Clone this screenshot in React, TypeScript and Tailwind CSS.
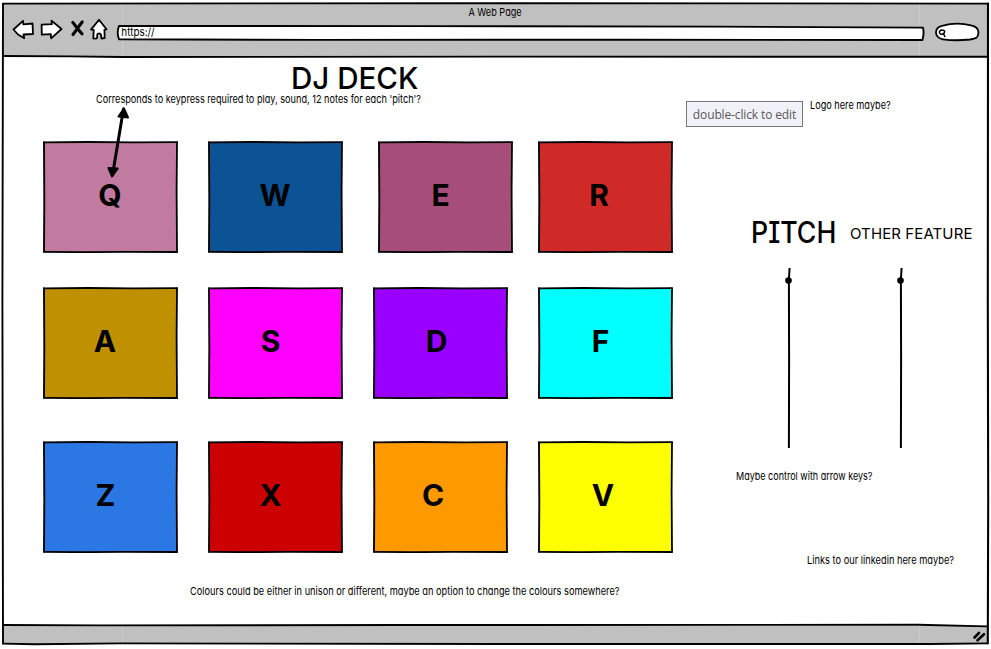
import type { ReactNode } from "react";

type Pad = { key: string; color: string; gap: string; nudge: string };

const rows: { place: string; nudgeY: string; pads: Pad[] }[] = [
  {
    place: "mt-[35px]",
    nudgeY: "pb-[4px]",
    pads: [
      { key: "Q", color: "bg-[#c27ba0]", gap: "ml-[43px]", nudge: "pr-[1px]" },
      { key: "W", color: "bg-[#0b5394]", gap: "ml-[30px]", nudge: "pr-[1px]" },
      { key: "E", color: "bg-[#a64d79]", gap: "ml-[35px]", nudge: "pr-[10px]" },
      { key: "R", color: "bg-[#cf2a27]", gap: "ml-[25px]", nudge: "pr-[13px]" },
    ],
  },
  {
    place: "mt-[34px]",
    nudgeY: "pb-[5px]",
    pads: [
      { key: "A", color: "bg-[#bf9000]", gap: "ml-[43px]", nudge: "pr-[11px]" },
      { key: "S", color: "bg-[#ff00ff]", gap: "ml-[30px]", nudge: "pr-[10px]" },
      { key: "D", color: "bg-[#9900ff]", gap: "ml-[30px]", nudge: "pr-[8px]" },
      { key: "F", color: "bg-[#00ffff]", gap: "ml-[30px]", nudge: "pr-[10px]" },
    ],
  },
  {
    place: "mt-[42px]",
    nudgeY: "pb-[5px]",
    pads: [
      { key: "Z", color: "bg-[#2b78e4]", gap: "ml-[43px]", nudge: "pr-[10px]" },
      { key: "X", color: "bg-[#cc0000]", gap: "ml-[30px]", nudge: "pr-[10px]" },
      { key: "C", color: "bg-[#ff9900]", gap: "ml-[30px]", nudge: "pr-[15px]" },
      { key: "V", color: "bg-[#ffff00]", gap: "ml-[30px]", nudge: "pr-[5px]" },
    ],
  },
];

function Note({
  children,
  scale = "scale-x-[0.832]",
  className = "",
}: {
  children: ReactNode;
  scale?: string;
  className?: string;
}) {
  return (
    <p className={`w-max origin-left whitespace-nowrap text-[11px] leading-[14px] ${scale} ${className}`}>{children}</p>
  );
}

function PadButton({ pad, nudgeY }: { pad: Pad; nudgeY: string }) {
  return (
    <div className={`relative h-[112px] w-[135px] shrink-0 p-px ${pad.gap}`}>
      <div
        className={`flex h-full w-full items-center justify-center text-[30px] leading-none font-bold ${pad.color} ${pad.nudge} ${nudgeY}`}
      >
        {pad.key}
      </div>
      <svg className="absolute inset-0" width="135" height="112" fill="none" stroke="#000" strokeLinecap="round">
        <path d="M1 1.3 L45 1 L90 1.4 L134 1.2" strokeWidth="1.8" />
        <path d="M134 1.2 L133.6 50 L134 111" strokeWidth="1.8" />
        <path d="M134 111 L80 110.8 L40 111.2 L1 110.8" strokeWidth="1.8" />
        <path d="M1 110.8 L1.3 60 L1 1.3" strokeWidth="1.9" />
      </svg>
    </div>
  );
}

function Slider() {
  return (
    <svg width="10" height="182" fill="none" stroke="#000" className="shrink-0">
      <path d="M5.6 1 L4.9 12 L5.1 90 L4.9 181" strokeWidth="2" />
      <circle cx="4.5" cy="13.5" r="3.3" fill="#000" stroke="none" />
    </svg>
  );
}

function Toolbar() {
  return (
    <header className="h-[54px] bg-[#c0c0c0]">
      <p className="flex h-[18px] items-center justify-center text-[11px] leading-[14px]">
        <span className="scale-x-[0.832]">A Web Page</span>
      </p>
      <div className="flex h-[18px] items-center">
        <svg className="ml-[9px] shrink-0" width="100" height="26" fill="#fff" stroke="#000" strokeWidth="1.8" strokeLinejoin="round">
          <path d="M1.5 12.5 L11 3.8 L11.3 7.4 L20.5 6.5 L21 17 L11.5 17.5 L12.3 21.2 L6 17.5 Z" />
          <path d="M49.5 12 L39.5 3.6 L39.8 7.2 L29.6 7.7 L29.8 17.7 L38.8 17.2 L39.2 21.4 Z" />
          <path d="M60.8 5.5 C63 8 66 12.5 70 16.8 M70.2 5 C67 9 64.5 13 61 17.5" strokeWidth="3.1" fill="none" strokeLinecap="round" />
          <path d="M87 2.8 L79 12.6 L81.7 12.8 L81.3 21.6 L85 21.3 L85.3 17.5 C86 16 88.2 16 88.9 17.5 L89.5 21.5 L92.7 21 L92.4 12.8 L94.5 12.3 Z" />
        </svg>
        <div className="relative mt-[6px] ml-[3px] h-[16px] w-[810px] shrink-0">
          <svg className="absolute inset-0" width="810" height="16" fill="#fff" stroke="#000" strokeWidth="1.9" strokeLinejoin="round">
            <path d="M4 1 L300 1.1 L600 1.6 L808 2.6 Q809.3 8 807.5 15 L500 14.7 L200 14.9 L4 14.2 Q1.4 8 4 1 Z" />
          </svg>
          <span className="relative block w-max origin-left scale-x-[0.9] pl-[7px] text-[11px] leading-[14px]">https://</span>
        </div>
        <svg className="mt-[4px] ml-[9px] shrink-0" width="48" height="20" fill="#fff" stroke="#000" strokeWidth="1.8">
          <path d="M8 3.8 C17 1.2 29 1.2 37 3.3 C43 4.5 44.8 7 44.4 11 C44.2 16 42 16.7 36 17.5 C26 18.6 16 18.3 9 17.3 C4 16.5 1.7 13 2 10 C2.2 7 4 4.8 8 3.8 Z" />
          <path d="M10.6 9.6 C10.6 7.6 5.2 7.2 5.4 10.3 C5.6 13.2 10.6 12.6 10.6 9.6 M9.5 11.5 L11 15" strokeWidth="1.5" fill="none" />
        </svg>
      </div>
    </header>
  );
}

export default function App() {
  return (
    <div
      className="relative h-[649px] w-[991px] overflow-hidden bg-white pt-[3px] pl-[3px] font-['Inter','Liberation_Sans',sans-serif] text-black [font-feature-settings:'cv08','cv11']"
    >
      <div className="flex h-[641px] w-[985px] flex-col">
        <Toolbar />
        <main className="flex min-h-0 flex-1">
          <section className="-ml-[3px] w-[683px] shrink-0">
            <h1 className="mt-[4px] ml-[291px] h-[31px] w-max origin-left scale-x-[0.985] text-[30px] leading-[35px] font-medium whitespace-nowrap">
              DJ DECK
            </h1>
            <Note className="ml-[96px]">
              Corresponds to keypress required to play, sound, 12 notes for each 'pitch'?
            </Note>
            {rows.map((row) => (
              <div key={row.pads[0].key} className={`flex ${row.place}`}>
                {row.pads.map((pad) => (
                  <PadButton key={pad.key} pad={pad} nudgeY={row.nudgeY} />
                ))}
              </div>
            ))}
            <Note className="mt-[31px] ml-[190px]" scale="scale-x-[0.839]">
              Colours could be either in unison or different, maybe an option to change the colours somewhere?
            </Note>
          </section>
          <aside className="flex min-w-0 flex-1 flex-col">
            <div className="mt-[41px] flex items-start pl-[3px]">
              <div className="mt-[3px] flex h-[26px] w-[117px] shrink-0 items-center justify-center border border-[#767a80] bg-[#f1f2f9] pt-px font-['Open_Sans',sans-serif] text-[12px] tracking-[-0.13px] whitespace-nowrap text-[#575757]">
                double-click to edit
              </div>
              <Note className="ml-[7px]">Logo here maybe?</Note>
            </div>
            <div className="mt-[86px] flex h-[38px] items-center">
              <h2 className="ml-[68px] w-[87px] origin-left scale-x-[0.89] text-[30px] leading-none font-medium whitespace-nowrap">PITCH</h2>
              <h3 className="ml-[12px] pt-[2px] text-[15px] leading-none tracking-[0.1px] whitespace-nowrap">OTHER FEATURE</h3>
            </div>
            <div className="mt-[16px] flex gap-[102px] pl-[101px]">
              <Slider />
              <Slider />
            </div>
            <Note className="mt-[20px] ml-[53px]" scale="scale-x-[0.82]">
              Maybe control with arrow keys?
            </Note>
            <Note className="mt-[70px] ml-[124px]" scale="scale-x-[0.842]">
              Links to our linkedin here maybe?
            </Note>
          </aside>
        </main>
        <footer className="h-[18px] shrink-0 bg-[#c0c0c0]" />
      </div>
      <svg className="absolute inset-0" width="991" height="649" fill="none" stroke="#000" strokeWidth="1.9" strokeLinecap="round">
        <path d="M122.5 4 V24 M122.5 41 V56 M919.5 4 V25 M919.5 42 V56 M122.5 626 V643 M919.5 626 V643" stroke="#cbcbcb" strokeWidth="1" />
        <path d="M918 624.2 L988 626.2 L988 622 L918 622 Z" fill="#fff" stroke="none" />
        <path d="M3 3.6 L500 3.2 L988 3.6" />
        <path d="M988 3.6 L987.8 300 L988.2 500 L987.8 643.5" strokeWidth="2.1" />
        <path d="M3 3.6 L2.4 300 L3 643.5" />
        <path d="M3 56 L70 56.4 L122 57 L500 56.6 L988 56.8" />
        <path d="M3 625 L100 625.4 L400 625 L918 624.8 L987 626.4" />
        <path d="M3 643.6 L35 644.2 L120 643.4 L500 644 L930 644 L987 643.4" />
        <path d="M123.5 109 L112.5 175" strokeWidth="3" />
        <path d="M124 108.5 L118.5 116.5 L128 117.5 Z M112 176.5 L108.5 168 L117.8 168.5 Z" fill="#000" strokeWidth="2" strokeLinejoin="round" />
        <path d="M974.5 637.5 L979 632.8 M977.5 640.3 L984 634.2" strokeWidth="2.6" />
      </svg>
    </div>
  );
}
